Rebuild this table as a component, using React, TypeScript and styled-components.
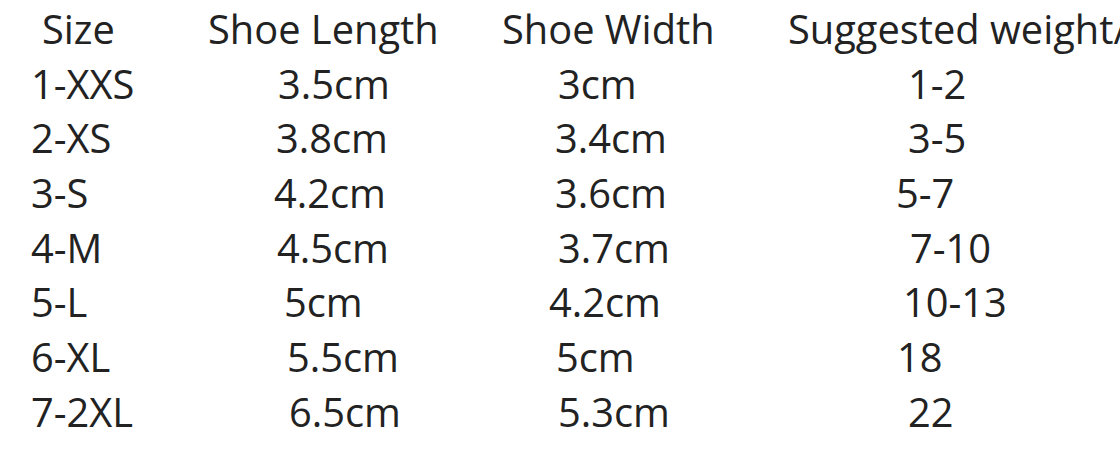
import React from 'react';
import styled, { createGlobalStyle } from 'styled-components';

const GlobalStyle = createGlobalStyle`
  html, body {
    margin: 0;
    padding: 0;
    background: #ffffff;
  }
`;

const Chart = styled.div`
  display: grid;
  grid-template-columns: 177px 294px 286px 1fr;
  grid-auto-rows: 54.7px;
  align-content: start;
  padding: 2px 0 0 31px;
  width: 1120px;
  height: 452px;
  box-sizing: border-box;
  overflow: hidden;
  font-family: 'Open Sans', 'Liberation Sans', sans-serif;
  font-size: 39.8px;
  line-height: 54.7px;
  color: #222222;
  white-space: nowrap;
`;

const Cell = styled.div<{ $shift?: number }>`
  padding-left: ${(p) => p.$shift ?? 0}px;
`;

type Row = [string, number][];

const rows: Row[] = [
  [['Size', 11], ['Shoe Length', 0], ['Shoe Width', -1], ['Suggested weight/', 0]],
  [['1-XXS', 0], ['3.5cm', 70], ['3cm', 56], ['1-2', 120]],
  [['2-XS', 0], ['3.8cm', 68], ['3.4cm', 53], ['3-5', 120]],
  [['3-S', 0], ['4.2cm', 66], ['3.6cm', 53], ['5-7', 108]],
  [['4-M', 0], ['4.5cm', 69], ['3.7cm', 56], ['7-10', 122]],
  [['5-L', 0], ['5cm', 76], ['4.2cm', 47], ['10-13', 115]],
  [['6-XL', 0], ['5.5cm', 79], ['5cm', 54], ['18', 109]],
  [['7-2XL', 0], ['6.5cm', 81], ['5.3cm', 56], ['22', 120]],
];

function App() {
  return (
    <>
      <GlobalStyle />
      <Chart>
        {rows.map((row, i) =>
          row.map(([text, shift], j) => (
            <Cell key={`${i}-${j}`} $shift={shift}>
              {text}
            </Cell>
          ))
        )}
      </Chart>
    </>
  );
}

export default App;
